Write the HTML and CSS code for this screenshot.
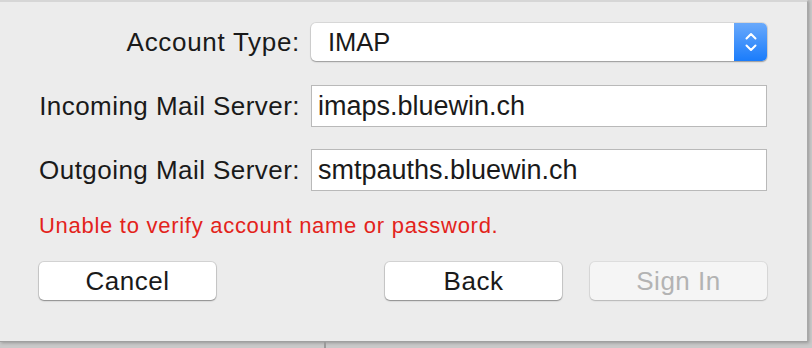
FILE: index.html
```html
<!DOCTYPE html>
<html>
<head>
<meta charset="utf-8">
<link rel="stylesheet" href="styles.css">
</head>
<body>
<div class="screen">
  <div class="sheet">
    <div class="form">
      <label class="label">Account Type:</label>
      <div class="popup">
        <span class="popup-value">IMAP</span>
        <span class="stepper">
          <svg width="14" height="22" viewBox="0 0 14 22"><path d="M2.5 7.5 L7 3 L11.5 7.5" fill="none" stroke="#fff" stroke-width="2" stroke-linecap="round" stroke-linejoin="round"/><path d="M2.5 14.5 L7 19 L11.5 14.5" fill="none" stroke="#fff" stroke-width="2" stroke-linecap="round" stroke-linejoin="round"/></svg>
        </span>
      </div>
      <label class="label">Incoming Mail Server:</label>
      <div class="field">imaps.bluewin.ch</div>
      <label class="label">Outgoing Mail Server:</label>
      <div class="field">smtpauths.bluewin.ch</div>
    </div>
    <p class="error">Unable to verify account name or password.</p>
    <div class="buttons">
      <button class="btn">Cancel</button>
      <div class="right">
        <button class="btn">Back</button>
        <button class="btn disabled">Sign In</button>
      </div>
    </div>
  </div>
  <div class="below"><div class="divider"></div></div>
</div>
</body>
</html>
```
FILE: styles.css
```css
html, body {
  margin: 0;
  padding: 0;
}
body {
  width: 812px;
  height: 348px;
  overflow: hidden;
  background: #c9c9c9;
  font-family: "Liberation Sans", Arial, sans-serif;
  color: #1a1a1a;
}
.screen {
  position: relative;
  width: 812px;
  height: 348px;
}
.sheet {
  box-sizing: border-box;
  width: 808px;
  height: 342px;
  background: #ececec;
  border-top: 2px solid #d6d6d6;
  border-right: 1px solid #a8a8a8;
  border-bottom: 1px solid #a0a0a0;
  box-shadow: 1px 1px 3px rgba(0,0,0,0.25);
  padding: 21px 0 0 0;
}
.form {
  display: grid;
  grid-template-columns: 299px 456px;
  grid-template-rows: 40px 42px 42px;
  column-gap: 12px;
  row-gap: 22px;
  align-items: center;
}
.label {
  text-align: right;
  font-size: 26px;
  letter-spacing: 0.45px;
  margin-right: -1px;
}
.label:first-child {
  align-self: start;
  line-height: 38px;
  letter-spacing: 0.7px;
}
.popup {
  align-self: start;
  box-sizing: border-box;
  height: 38px;
  background: #fff;
  border-radius: 5px;
  box-shadow: 0 0 0 1px rgba(0,0,0,0.08), 0 1px 1.5px rgba(0,0,0,0.3);
  display: flex;
  align-items: center;
  justify-content: space-between;
  overflow: hidden;
}
.popup-value {
  padding-left: 17px;
  font-size: 25.5px;
}
.stepper {
  width: 33px;
  height: 38px;
  background: linear-gradient(#69a9fb, #1a7cfb);
  display: flex;
  align-items: center;
  justify-content: center;
}
.field {
  box-sizing: border-box;
  height: 42px;
  background: #fff;
  border: 1px solid #b9b9b9;
  font-size: 27px;
  padding-left: 6px;
  line-height: 40px;
}
.error {
  margin: 0;
  padding: 23px 0 0 39px;
  line-height: 24px;
  color: #e3231b;
  font-size: 22px;
  letter-spacing: 0.72px;
}
.buttons {
  display: flex;
  justify-content: space-between;
  padding: 24px 0 0 39px;
  width: 767px;
  box-sizing: border-box;
}
.right {
  display: flex;
  gap: 28px;
}
.btn {
  box-sizing: border-box;
  width: 177px;
  height: 38px;
  background: #fff;
  border: none;
  border-radius: 5px;
  box-shadow: 0 0 0 1px rgba(0,0,0,0.1), 0 1px 1.5px rgba(0,0,0,0.35);
  font-family: "Liberation Sans", Arial, sans-serif;
  font-size: 26px;
  letter-spacing: 0.5px;
  color: #1a1a1a;
  padding: 0;
}
.btn.disabled {
  background: #f5f5f5;
  color: #b3b3b3;
  box-shadow: 0 0 0 1px rgba(0,0,0,0.06), 0 1px 1.5px rgba(0,0,0,0.18);
}
.below {
  height: 6px;
  position: relative;
}
.divider {
  position: absolute;
  left: 324px;
  top: 0;
  width: 2px;
  height: 6px;
  background: #9a9a9a;
}
```
